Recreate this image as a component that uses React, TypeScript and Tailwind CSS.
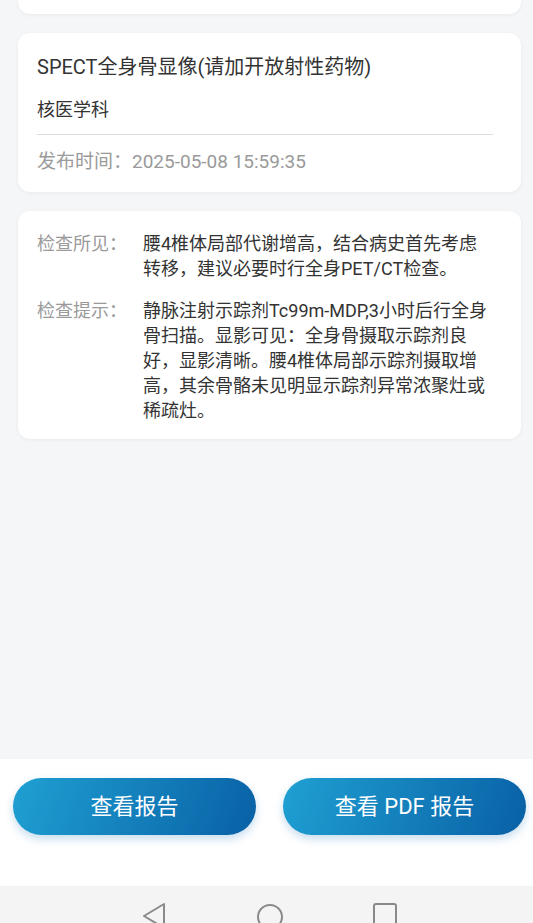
import React from "react";

const font = { fontFamily: "Roboto, 'Noto Sans CJK SC', sans-serif" };

function InfoRow({ label, text }: { label: string; text: string }) {
  return (
    <div className="flex text-[18px] leading-[25px]">
      <div className="w-[106px] shrink-0 text-[#9a9a9a]">{label}</div>
      <div className="min-w-0 flex-1 text-[#333]">{text}</div>
    </div>
  );
}

export default function App() {
  return (
    <div style={font} className="flex h-[923px] w-full flex-col overflow-hidden bg-[#f5f6f8]">
      <main className="flex min-h-0 flex-1 flex-col gap-[19px]">
        {/* previous card, scrolled mostly out of view */}
        <div className="ml-[18px] mr-[12px] h-[14px] rounded-b-xl bg-white shadow-[0_1px_4px_rgba(0,0,0,0.05)]" />

        <section className="ml-[18px] mr-[12px] rounded-xl bg-white pb-[18px] pl-[19px] pr-[28px] pt-[21px] shadow-[0_1px_4px_rgba(0,0,0,0.05)]">
          <h2 className="text-[20px] leading-[26px] text-[#333]">
            SPECT全身骨显像(请加开放射性药物)
          </h2>
          <p className="mt-[17px] text-[18px] leading-[25px] text-[#333]">核医学科</p>
          <div className="mt-[12px] h-px bg-[#dcdcdc]" />
          <p className="mt-[15px] text-[19px] leading-[24px] text-[#9a9a9a]">
            发布时间：2025-05-08 15:59:35
          </p>
        </section>

        <section className="ml-[18px] mr-[12px] flex flex-col gap-[17px] rounded-xl bg-white pb-4 pl-[19px] pr-[28px] pt-5 shadow-[0_1px_4px_rgba(0,0,0,0.05)]">
          <InfoRow
            label="检查所见："
            text="腰4椎体局部代谢增高，结合病史首先考虑转移，建议必要时行全身PET/CT检查。"
          />
          <InfoRow
            label="检查提示："
            text="静脉注射示踪剂Tc99m-MDP,3小时后行全身骨扫描。显影可见：全身骨摄取示踪剂良好，显影清晰。腰4椎体局部示踪剂摄取增高，其余骨骼未见明显示踪剂异常浓聚灶或稀疏灶。"
          />
        </section>
      </main>

      <footer className="flex h-[127px] shrink-0 items-start gap-[27px] bg-white pl-[13px] pr-[7px] pt-[19px]">
        <button className="h-[57px] flex-1 rounded-full bg-[linear-gradient(110deg,#1fa0d3,#0960a5)] text-[22px] text-white shadow-[0_4px_8px_rgba(30,120,190,0.25)]">
          查看报告
        </button>
        <button className="h-[57px] flex-1 rounded-full bg-[linear-gradient(110deg,#1fa0d3,#0960a5)] text-[22px] text-white shadow-[0_4px_8px_rgba(30,120,190,0.25)]">
          查看 PDF 报告
        </button>
      </footer>

      <nav className="flex h-[37px] shrink-0 items-start bg-[#f4f4f4] pt-[17px]">
        <div className="flex w-full items-start">
          <svg className="ml-[142px]" width="24" height="26" viewBox="0 0 24 26" fill="none" stroke="#8a8a8a" strokeWidth="2" strokeLinejoin="round">
            <path d="M22 1 L2 13 L22 25 Z" />
          </svg>
          <svg className="ml-[90px]" width="28" height="28" viewBox="0 0 28 28" fill="none" stroke="#8a8a8a" strokeWidth="2">
            <circle cx="14" cy="14" r="12" />
          </svg>
          <svg className="ml-[88px]" width="26" height="26" viewBox="0 0 26 26" fill="none" stroke="#8a8a8a" strokeWidth="2">
            <rect x="2" y="1" width="22" height="24" rx="2" />
          </svg>
        </div>
      </nav>
    </div>
  );
}
